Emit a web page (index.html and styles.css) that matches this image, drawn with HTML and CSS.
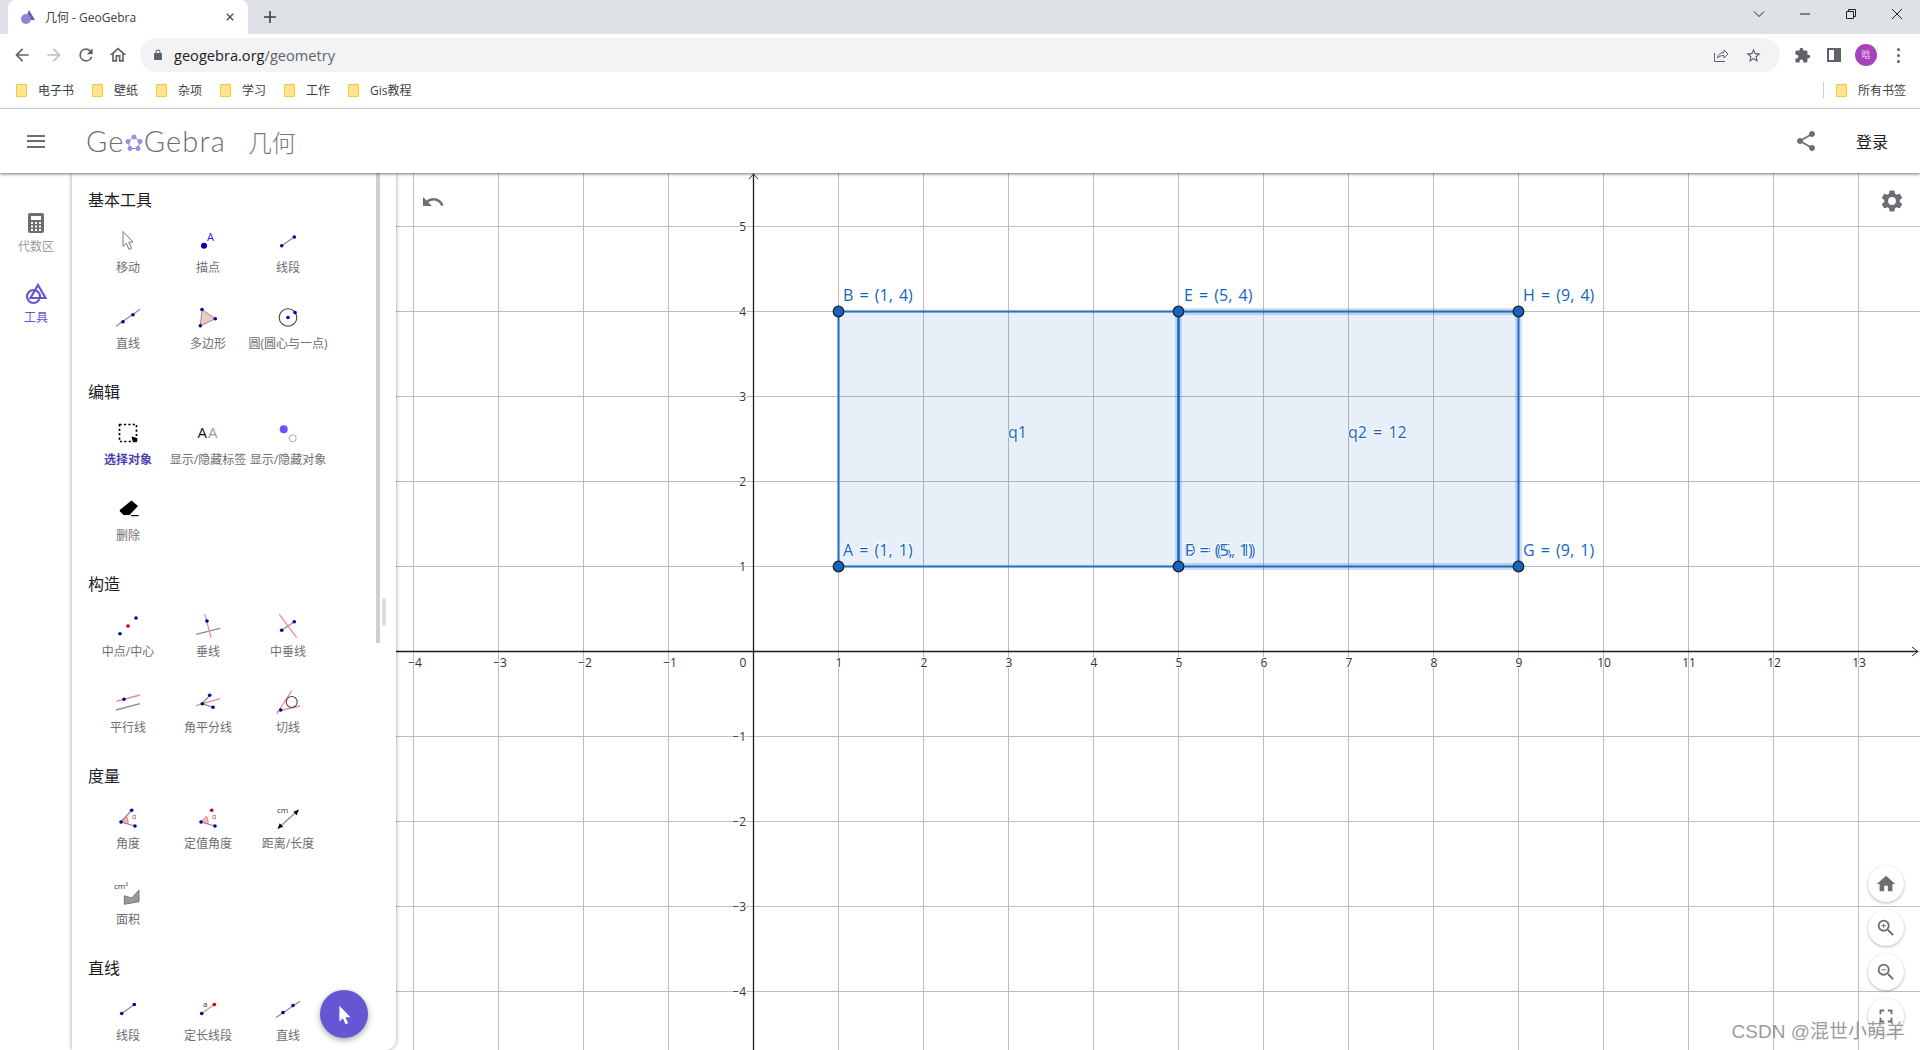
FILE: index.html
```html
<!DOCTYPE html>
<html lang="zh-CN">
<head>
    <meta charset="UTF-8">
    <title>几何 - GeoGebra</title>
    <link rel="stylesheet" href="styles.css">
</head>
<body>

    <!-- browser -->
    <div class="tabstrip">
        <div class="tab">
            <svg class="favicon" viewBox="0 0 16 16"><path d="M9 1l6 10H5z" fill="#5f5a9e"/><circle cx="6" cy="10" r="5" fill="#8a86e0"/></svg>
            <span class="tab-title">几何 - GeoGebra</span>
            <svg class="tab-close" viewBox="0 0 10 10"><path d="M1 1l8 8M9 1l-8 8"/></svg>
        </div>
        <svg class="new-tab" viewBox="0 0 12 12"><path d="M6 0v12M0 6h12"/></svg>
        <div class="win-controls">
            <svg viewBox="0 0 12 12"><path d="M1 3.5l5 5 5-5"/></svg>
            <svg viewBox="0 0 12 12"><path d="M1 6h10"/></svg>
            <svg viewBox="0 0 12 12"><path d="M1.5 3.5h7v7h-7zM3.5 3.5v-2h7v7h-2"/></svg>
            <svg viewBox="0 0 12 12"><path d="M1 1l10 10M11 1L1 11"/></svg>
        </div>
    </div>

    <div class="toolbar">
        <svg class="tb-icon" viewBox="0 0 24 24"><path d="M20 11H7.83l5.59-5.59L12 4l-8 8 8 8 1.41-1.41L7.83 13H20v-2z"/></svg>
        <svg class="tb-icon off" viewBox="0 0 24 24"><path d="M4 11h12.17l-5.59-5.59L12 4l8 8-8 8-1.41-1.41L16.17 13H4v-2z"/></svg>
        <svg class="tb-icon" viewBox="0 0 24 24"><path d="M17.65 6.35A7.96 7.96 0 0 0 12 4a8 8 0 1 0 7.75 10h-2.08A6 6 0 1 1 12 6c1.66 0 3.14.69 4.22 1.78L13 11h7V4l-2.35 2.35z"/></svg>
        <svg class="tb-icon" viewBox="0 0 24 24"><path d="M12 5.69l5 4.5V18h-2v-6H9v6H7v-7.81l5-4.5M12 3L2 12h3v8h6v-6h2v6h6v-8h3L12 3z"/></svg>
        <div class="address">
            <svg class="lock" viewBox="0 0 24 24"><path d="M18 8h-1V6a5 5 0 0 0-10 0v2H6a2 2 0 0 0-2 2v10c0 1.1.9 2 2 2h12a2 2 0 0 0 2-2V10a2 2 0 0 0-2-2zM9 6a3 3 0 0 1 6 0v2H9V6z"/></svg>
            <span class="url">geogebra.org<span class="url-path">/geometry</span></span>
            <svg class="addr-share" viewBox="0 0 16 16"><path d="M1.5 6v8.5h10.5M4.5 11c.5-3.5 3-5.500 6.500-5.500V3l4 4-4 4V8.500c-2.500 0-5 .5-6.500 2.500z"/></svg>
            <svg class="addr-star" viewBox="0 0 24 24"><path d="M22 9.24l-7.19-.62L12 2 9.19 8.63 2 9.24l5.46 4.73L5.82 21 12 17.27 18.18 21l-1.630-7.030L22 9.240zM12 15.400l-3.760 2.270 1-4.280-3.320-2.880 4.380-.38L12 6.100l1.710 4.040 4.380.38-3.320 2.880 1 4.280L12 15.400z"/></svg>
        </div>
        <svg class="tb-icon puzzle" viewBox="0 0 24 24"><path d="M20.500 11H19V7a2 2 0 0 0-2-2h-4V3.500a2.500 2.500 0 0 0-5 0V5H4a2 2 0 0 0-2 2v3.800h1.500a2.700 2.700 0 0 1 0 5.400H2V20a2 2 0 0 0 2 2h3.800v-1.500a2.700 2.700 0 0 1 5.400 0V22H17a2 2 0 0 0 2-2v-4h1.500a2.500 2.500 0 0 0 0-5z"/></svg>
        <div class="sidepanel-icon"></div>
        <div class="avatar">晗</div>
        <div class="kebab"><i></i><i></i><i></i></div>
    </div>

    <div class="bookmarks">
        <a class="bm"><span class="folder"></span>电子书</a>
        <a class="bm"><span class="folder"></span>壁纸</a>
        <a class="bm"><span class="folder"></span>杂项</a>
        <a class="bm"><span class="folder"></span>学习</a>
        <a class="bm"><span class="folder"></span>工作</a>
        <a class="bm"><span class="folder"></span>Gis教程</a>
        <div class="bm-all">
            <a class="bm"><span class="folder"></span>所有书签</a>
        </div>
    </div>

    <!-- app header -->
    <header class="app-header">
        <div class="burger"><i></i><i></i><i></i></div>
        <div class="logo">Ge<svg class="logo-o" viewBox="0 0 18 18"><path d="M9 3l6 4.500-2 7H5l-2-7z"/><circle cx="9" cy="3" r="2"/><circle cx="15" cy="7.500" r="2"/><circle cx="13" cy="14.500" r="2"/><circle cx="5" cy="14.500" r="2"/><circle cx="3" cy="7.500" r="2"/></svg>Gebra</div>
        <div class="app-title">几何</div>
        <svg class="header-share" viewBox="0 0 24 24"><path d="M18 16.080c-.76 0-1.440.3-1.960.77L8.910 12.700c.05-.23.09-.46.09-.7s-.04-.47-.09-.7l7.050-4.110c.54.5 1.250.81 2.040.81 1.660 0 3-1.340 3-3s-1.340-3-3-3-3 1.340-3 3c0 .24.04.47.09.7L8.040 9.810C7.500 9.310 6.790 9 6 9c-1.660 0-3 1.340-3 3s1.340 3 3 3c.79 0 1.500-.31 2.040-.81l7.120 4.160c-.05.21-.08.43-.08.65 0 1.610 1.310 2.920 2.920 2.920 1.610 0 2.920-1.310 2.920-2.920s-1.310-2.920-2.920-2.920z"/></svg>
        <div class="login">登录</div>
    </header>

    <div class="main">
        <nav class="rail">
            <div class="rail-item">
                <svg viewBox="0 0 24 24"><path d="M6 2h12a2 2 0 0 1 2 2v16a2 2 0 0 1-2 2H6a2 2 0 0 1-2-2V4a2 2 0 0 1 2-2zm1 3v4h10V5zm0 6v2h2v-2zm4 0v2h2v-2zm4 0v2h2v-2zm-8 3.500v2h2v-2zm4 0v2h2v-2zm4 0v2h2v-2zm-8 3.500v2h2v-2zm4 0v2h2v-2zm4 0v2h2v-2z" fill-rule="evenodd"/></svg>
                <span>代数区</span>
            </div>
            <div class="rail-item active">
                <svg viewBox="0 0 24 24"><circle cx="9.500" cy="14.500" r="6.500" class="rail-stroke"/><path d="M14 3l7.500 13H6.500z" class="rail-stroke"/></svg>
                <span>工具</span>
            </div>
        </nav>

        <aside class="panel">
            <section class="tool-section">
                <h3>基本工具</h3>
                <div class="tool-grid">
                    <div class="tool">
                        <svg viewBox="0 0 32 32"><path d="M11 5.500l10 10.500-4.200.3 2.700 6-2.500 1.100-2.600-6.100-3.400 3z" fill="#fff" stroke="#777" stroke-width="1"/></svg>
                        <span>移动</span>
                    </div>
                    <div class="tool">
                        <svg viewBox="0 0 32 32"><circle class="pt" cx="12" cy="19.700" r="3"/><text class="ic-a" x="15" y="15">A</text></svg>
                        <span>描点</span>
                    </div>
                    <div class="tool">
                        <svg viewBox="0 0 32 32"><path class="ln" d="M9.700 19.700L22.300 11"/><circle class="pt" cx="9.700" cy="19.700" r="1.800"/><circle class="pt" cx="22.300" cy="11" r="1.800"/></svg>
                        <span>线段</span>
                    </div>
                    <div class="tool">
                        <svg viewBox="0 0 32 32"><path class="ln" d="M4 24.300L28 7.300"/><circle class="pt" cx="11" cy="19.700" r="1.800"/><circle class="pt" cx="21" cy="12.700" r="1.800"/></svg>
                        <span>直线</span>
                    </div>
                    <div class="tool">
                        <svg viewBox="0 0 32 32"><path d="M10 7.500l13.300 9.300-15 7z" fill="#e5cfc4" stroke="#b9826a"/><circle class="pt" cx="10" cy="7.500" r="1.800"/><circle class="pt" cx="23.300" cy="16.800" r="1.800"/><circle class="pt" cx="8.300" cy="23.800" r="1.800"/></svg>
                        <span>多边形</span>
                    </div>
                    <div class="tool">
                        <svg viewBox="0 0 32 32"><circle class="dk" cx="16" cy="15.500" r="8.800"/><circle class="pt" cx="16" cy="15.500" r="1.800"/><circle class="pt" cx="23" cy="10.500" r="1.800"/></svg>
                        <span>圆(圆心与一点)</span>
                    </div>
                </div>
            </section>

            <section class="tool-section">
                <h3>编辑</h3>
                <div class="tool-grid">
                    <div class="tool selected">
                        <svg viewBox="0 0 32 32"><rect x="7.500" y="6.500" width="17" height="17" fill="none" stroke="#000" stroke-width="1.700" stroke-dasharray="2.200 2.200"/><path d="M19.500 18.500l6 1.500-2 .9 2 2.100-1.500 1.500-2-2-1 2z"/></svg>
                        <span>选择对象</span>
                    </div>
                    <div class="tool">
                        <svg viewBox="0 0 32 32"><text class="ic-aa" x="5.500" y="20">A</text><text class="ic-aa light" x="16" y="20">A</text></svg>
                        <span>显示/隐藏标签</span>
                    </div>
                    <div class="tool">
                        <svg viewBox="0 0 32 32"><circle cx="11.700" cy="11.300" r="4" fill="#6557ff"/><circle cx="20.700" cy="20.300" r="3.500" fill="none" stroke="#aaa"/></svg>
                        <span>显示/隐藏对象</span>
                    </div>
                    <div class="tool">
                        <svg viewBox="0 0 32 32"><path d="M19.500 6.500l6.500 5.500-8.500 9h-6l-3.500-3.500c-.5-.6-.4-1.400 0-1.800z"/><path d="M19 21h7.500v1.200H19z"/></svg>
                        <span>删除</span>
                    </div>
                </div>
            </section>

            <section class="tool-section">
                <h3>构造</h3>
                <div class="tool-grid">
                    <div class="tool">
                        <svg viewBox="0 0 32 32"><circle class="pt" cx="8" cy="23.700" r="1.800"/><circle class="pt red" cx="16" cy="16" r="1.800"/><circle class="pt" cx="24" cy="8" r="1.800"/></svg>
                        <span>中点/中心</span>
                    </div>
                    <div class="tool">
                        <svg viewBox="0 0 32 32"><path class="ln" d="M4 24.300L28 18.300"/><path class="ln pink" d="M13 4.300l6 23.400"/><circle class="pt" cx="15" cy="11" r="1.800"/></svg>
                        <span>垂线</span>
                    </div>
                    <div class="tool">
                        <svg viewBox="0 0 32 32"><path class="ln" d="M9.700 20.300l12.600-8.600"/><path class="ln pink" d="M7.300 4.300l17.400 23.400"/><circle class="pt" cx="9.700" cy="20.300" r="1.800"/><circle class="pt" cx="22.300" cy="11.700" r="1.800"/></svg>
                        <span>中垂线</span>
                    </div>
                    <div class="tool">
                        <svg viewBox="0 0 32 32"><path class="ln pink" d="M4 15.300L28 9"/><path class="ln" d="M4 24l24-6.300"/><circle class="pt" cx="12" cy="13.200" r="1.800"/></svg>
                        <span>平行线</span>
                    </div>
                    <div class="tool">
                        <svg viewBox="0 0 32 32"><path class="ln" d="M17.700 9.300l-7.400 8.400L21 21.300"/><path class="ln pink" d="M4 19.700l24-7"/><circle class="pt" cx="10.300" cy="17.700" r="1.800"/><circle class="pt" cx="17.700" cy="9.300" r="1.800"/><circle class="pt" cx="21" cy="21.300" r="1.800"/></svg>
                        <span>角平分线</span>
                    </div>
                    <div class="tool">
                        <svg viewBox="0 0 32 32"><path class="ln pink" d="M4.700 28L19.700 4.700M4.700 25.300L28 20"/><circle class="dk" cx="19.700" cy="16" r="5.500"/><circle class="pt" cx="8.700" cy="24" r="1.800"/></svg>
                        <span>切线</span>
                    </div>
                </div>
            </section>

            <section class="tool-section">
                <h3>度量</h3>
                <div class="tool-grid">
                    <div class="tool">
                        <svg viewBox="0 0 32 32"><path d="M9 20l5.200-5.800c1.600 2 2 4 1.800 7.700z" fill="#f9b4b8" stroke="#e66" stroke-width=".8"/><path class="ln" d="M19.700 8.300L9 20l14 4"/><circle class="pt" cx="9" cy="20" r="1.800"/><circle class="pt" cx="19.700" cy="8.300" r="1.800"/><circle class="pt" cx="23" cy="24" r="1.800"/><text class="ic-alpha" x="20" y="17">α</text></svg>
                        <span>角度</span>
                    </div>
                    <div class="tool">
                        <svg viewBox="0 0 32 32"><path d="M9 20l5.200-5.800c1.600 2 2 4 1.800 7.700z" fill="#f9b4b8" stroke="#e66" stroke-width=".8"/><path class="ln" d="M9 20l14 4"/><circle class="pt" cx="9" cy="20" r="1.800"/><circle class="pt red" cx="19.700" cy="8.300" r="1.800"/><circle class="pt" cx="23" cy="24" r="1.800"/><text class="ic-alpha" x="20" y="17">α</text></svg>
                        <span>定值角度</span>
                    </div>
                    <div class="tool">
                        <svg viewBox="0 0 32 32"><path class="ln" d="M5.700 26.700l21-19"/><path d="M26.700 7.700l-2 5.500-3.400-3.500zM5.700 26.700l2-5.500 3.400 3.500z"/><text class="ic-cm" x="5" y="11">cm</text></svg>
                        <span>距离/长度</span>
                    </div>
                    <div class="tool">
                        <svg viewBox="0 0 32 32"><path d="M12.300 17.700l7.400 2.300 7.300-8v11.700l-14.700 2.600z" fill="#999" stroke="#666" stroke-width=".8"/><text class="ic-cm" x="2" y="10.500">cm²</text></svg>
                        <span>面积</span>
                    </div>
                </div>
            </section>

            <section class="tool-section">
                <h3>直线</h3>
                <div class="tool-grid">
                    <div class="tool">
                        <svg viewBox="0 0 32 32"><path class="ln" d="M9.700 19.500L22.300 10.500"/><circle class="pt" cx="9.700" cy="19.500" r="1.800"/><circle class="pt" cx="22.300" cy="10.500" r="1.800"/></svg>
                        <span>线段</span>
                    </div>
                    <div class="tool">
                        <svg viewBox="0 0 32 32"><path class="ln pink" d="M9.700 19.500L22.300 10.500"/><circle class="pt" cx="9.700" cy="19.500" r="1.800"/><circle class="pt red" cx="22.300" cy="10.500" r="1.800"/><text class="ic-cm" x="11" y="13">a</text></svg>
                        <span>定长线段</span>
                    </div>
                    <div class="tool">
                        <svg viewBox="0 0 32 32"><path class="ln" d="M4 23.500L28 7.200"/><circle class="pt" cx="11" cy="18.500" r="1.800"/><circle class="pt" cx="21" cy="11.500" r="1.800"/></svg>
                        <span>直线</span>
                    </div>
                </div>
            </section>

            <div class="scroll-track"></div>
            <div class="scroll-thumb"></div>
            <div class="fab">
                <svg viewBox="0 0 24 24"><path d="M7 3l12 12.500h-5.500l3 6.500-2.800 1.200-3-6.600L7 20.500z"/></svg>
            </div>
        </aside>

        <div class="canvas">
            <svg class="plot" width="1524" height="877" viewBox="396 173 1524 877">
                <defs>
                    <pattern id="grid" x="413" y="226" width="85" height="85" patternUnits="userSpaceOnUse">
                        <path d="M0 0V85M0 0H85" fill="none" stroke="#bdbdbd" stroke-width="2"/>
                    </pattern>
                </defs>
                <rect x="396" y="173" width="1524" height="877" fill="url(#grid)"/>

                <!-- axes -->
                <path class="axis" d="M396 651.500H1918M753.500 1050V174"/>
                <path class="axis-head" d="M749 179l4.500-5 4.500 5M1912 647l6 4.500-6 4.500"/>

                <g class="tick-x">
                    <text x="415" y="667">−4</text>
                    <text x="500" y="667">−3</text>
                    <text x="585" y="667">−2</text>
                    <text x="670" y="667">−1</text>
                    <text x="743" y="667">0</text>
                    <text x="839" y="667">1</text>
                    <text x="924" y="667">2</text>
                    <text x="1009" y="667">3</text>
                    <text x="1094" y="667">4</text>
                    <text x="1179" y="667">5</text>
                    <text x="1264" y="667">6</text>
                    <text x="1349" y="667">7</text>
                    <text x="1434" y="667">8</text>
                    <text x="1519" y="667">9</text>
                    <text x="1604" y="667">10</text>
                    <text x="1689" y="667">11</text>
                    <text x="1774" y="667">12</text>
                    <text x="1859" y="667">13</text>
                </g>
                <g class="tick-y">
                    <text x="746" y="231">5</text>
                    <text x="746" y="316">4</text>
                    <text x="746" y="401">3</text>
                    <text x="746" y="486">2</text>
                    <text x="746" y="571">1</text>
                    <text x="746" y="741">−1</text>
                    <text x="746" y="826">−2</text>
                    <text x="746" y="911">−3</text>
                    <text x="746" y="996">−4</text>
                </g>

                <!-- q1, q2 -->
                <rect class="quad" x="838.500" y="311.500" width="340" height="255"/>
                <rect class="quad-glow" x="1178.500" y="311.500" width="340" height="255"/>
                <rect class="quad" x="1178.500" y="311.500" width="340" height="255"/>

                <g class="points">
                    <circle cx="838.500" cy="311.500" r="5.300"/>
                    <circle cx="838.500" cy="566.500" r="5.300"/>
                    <circle cx="1178.500" cy="311.500" r="5.300"/>
                    <circle cx="1178.500" cy="566.500" r="5.300"/>
                    <circle cx="1518.500" cy="311.500" r="5.300"/>
                    <circle cx="1518.500" cy="566.500" r="5.300"/>
                </g>

                <g class="labels">
                    <text x="843" y="301">B = (1, 4)</text>
                    <text x="843" y="556">A = (1, 1)</text>
                    <text x="1184" y="301">E = (5, 4)</text>
                    <text x="1184" y="556">D = (5, 1)</text>
                    <text x="1185" y="556">F = (5, 1)</text>
                    <text x="1523" y="301">H = (9, 4)</text>
                    <text x="1523" y="556">G = (9, 1)</text>
                    <text x="1008" y="438">q1</text>
                    <text x="1348" y="438">q2 = 12</text>
                </g>
            </svg>

            <svg class="undo" viewBox="0 0 24 24"><path d="M12.500 8c-2.650 0-5.050.99-6.900 2.600L2 7v9h9l-3.620-3.620c1.390-1.160 3.160-1.880 5.120-1.880 3.540 0 6.550 2.310 7.600 5.500l2.370-.78C21.080 11.030 17.150 8 12.500 8z"/></svg>
            <svg class="settings" viewBox="0 0 24 24"><path d="M19.140 12.940c.04-.3.06-.61.06-.94 0-.32-.02-.64-.07-.94l2.030-1.580a.49.49 0 0 0 .12-.61l-1.920-3.320a.488.488 0 0 0-.59-.22l-2.390.96c-.5-.38-1.030-.7-1.620-.94l-.36-2.540a.484.484 0 0 0-.48-.41h-3.840c-.24 0-.43.17-.47.41l-.36 2.540c-.59.24-1.130.57-1.620.94l-2.390-.96c-.22-.08-.47 0-.59.22L2.740 8.870c-.12.21-.08.47.12.61l2.030 1.580c-.05.3-.09.63-.09.94s.02.64.07.94l-2.030 1.580a.49.49 0 0 0-.12.61l1.920 3.320c.12.22.37.29.59.22l2.390-.96c.5.38 1.030.7 1.620.94l.36 2.540c.05.24.24.41.48.41h3.840c.24 0 .44-.17.47-.41l.36-2.540c.59-.24 1.130-.56 1.620-.94l2.390.96c.22.08.47 0 .59-.22l1.920-3.320c.12-.22.07-.47-.12-.61l-2.010-1.580zM12 15.600A3.600 3.600 0 1 1 12 8.400a3.600 3.600 0 0 1 0 7.200z"/></svg>

            <div class="view-btns">
                <div class="view-btn"><svg viewBox="0 0 24 24"><path d="M10 20v-6h4v6h5v-8h3L12 3 2 12h3v8z"/></svg></div>
                <div class="view-btn"><svg viewBox="0 0 24 24"><path d="M15.500 14h-.79l-.28-.27A6.470 6.470 0 0 0 16 9.500 6.500 6.500 0 1 0 9.500 16c1.610 0 3.090-.59 4.230-1.570l.27.28v.79l5 4.990L20.490 19l-4.990-5zm-6 0C7.010 14 5 11.990 5 9.500S7.010 5 9.500 5 14 7.010 14 9.500 11.990 14 9.500 14zM12 10h-2v2H9v-2H7V9h2V7h1v2h2v1z"/></svg></div>
                <div class="view-btn"><svg viewBox="0 0 24 24"><path d="M15.500 14h-.79l-.28-.27A6.470 6.470 0 0 0 16 9.500 6.500 6.500 0 1 0 9.500 16c1.610 0 3.090-.59 4.230-1.570l.27.28v.79l5 4.990L20.490 19l-4.990-5zm-6 0C7.010 14 5 11.990 5 9.500S7.010 5 9.500 5 14 7.010 14 9.500 11.990 14 9.500 14zM7 9h5v1H7z"/></svg></div>
                <div class="view-btn"><svg viewBox="0 0 24 24"><path d="M7 14H5v5h5v-2H7v-3zm-2-4h2V7h3V5H5v5zm12 7h-3v2h5v-5h-2v3zM14 5v2h3v3h2V5h-5z"/></svg></div>
            </div>

            <div class="watermark">CSDN @混世小萌羊</div>
        </div>
    </div>

</body>
</html>
```

FILE: styles.css
```css
html, body {
    margin: 0;
    padding: 0;
    height: 1050px;
    overflow: hidden;
    background-color: #fff;
    font-family: "Open Sans", "Noto Sans CJK SC", sans-serif;
}

/* browser */
.tabstrip {
    height: 34px;
    background-color: #dee1e6;
    display: flex;
    align-items: flex-start;
}

.tab {
    width: 240px;
    height: 34px;
    margin-left: 8px;
    padding: 0 12px;
    box-sizing: border-box;
    background-color: #fff;
    border-radius: 8px 8px 0 0;
    display: flex;
    align-items: center;
}

.favicon {
    width: 16px;
    height: 16px;
    margin-right: 9px;
}

.tab-title {
    flex: 1;
    font-size: 12px;
    color: #3c4043;
}

.tab-close {
    width: 8px;
    height: 8px;
    margin-right: 2px;
    fill: none;
    stroke: #45474a;
    stroke-width: 1.6;
}

.new-tab {
    width: 12px;
    height: 12px;
    margin: 11px 0 0 16px;
    stroke: #3c4043;
    stroke-width: 1.6;
}

.win-controls {
    margin-left: auto;
    margin-right: 17px;
    margin-top: 8px;
    display: flex;
    gap: 34px;
}

.win-controls svg {
    width: 12px;
    height: 12px;
    fill: none;
    stroke: #1f1f1f;
    stroke-width: 1;
}

.toolbar {
    height: 40px;
    padding: 2px 0 0 12px;
    box-sizing: border-box;
    background-color: #fff;
    display: flex;
    align-items: center;
    gap: 12px;
}

.tb-icon {
    width: 20px;
    height: 20px;
    fill: #5f6368;
    flex: none;
}

.tb-icon.off {
    fill: #bdc1c6;
}

.address {
    width: 1640px;
    height: 34px;
    padding: 0 18px 0 12px;
    box-sizing: border-box;
    flex: none;
    background-color: #f1f3f4;
    border-radius: 17px;
    display: flex;
    align-items: center;
}

.lock {
    width: 12px;
    height: 12px;
    fill: #5f6368;
    margin-right: 10px;
}

.url {
    flex: 1;
    font-size: 14.600px;
    color: #202124;
}

.url-path {
    color: #5f6368;
}

.addr-share {
    width: 16px;
    height: 16px;
    fill: none;
    stroke: #5f6368;
    stroke-width: 1;
    margin-right: 16px;
}

.addr-star {
    width: 17px;
    height: 17px;
    fill: #5f6368;
}

.puzzle {
    margin-left: 2px;
    width: 17px;
    height: 17px;
}

.sidepanel-icon {
    width: 14px;
    height: 14px;
    margin-left: 4px;
    background-color: #fff;
    border: solid #5f6368;
    border-width: 2px 7px 2px 2px;
    box-sizing: border-box;
    flex: none;
}

.avatar {
    width: 22px;
    height: 22px;
    margin-left: 2px;
    border-radius: 50%;
    background-color: #a742bc;
    color: #f3d9f8;
    font-size: 9px;
    line-height: 22px;
    text-align: center;
    flex: none;
}

.kebab {
    display: flex;
    flex-direction: column;
    gap: 3px;
    margin-left: 8px;
}

.kebab i {
    display: block;
    width: 3px;
    height: 3px;
    border-radius: 50%;
    background-color: #5f6368;
}

.bookmarks {
    height: 32px;
    padding: 0 14px 2px 16px;
    border-bottom: 1px solid #dadce0;
    display: flex;
    align-items: center;
    gap: 18px;
}

.bm {
    display: flex;
    align-items: center;
    font-size: 12px;
    color: #3c4043;
}

.folder {
    width: 11px;
    height: 13px;
    margin-right: 11px;
    background-color: #fde68d;
    border: 1px solid #f0c93e;
    border-radius: 1px;
    box-sizing: border-box;
}

.bm-all {
    margin-left: auto;
    padding-left: 12px;
    border-left: 1px solid #ccc;
    height: 16px;
    display: flex;
    align-items: center;
}

/* app header */
.app-header {
    position: relative;
    z-index: 3;
    height: 64px;
    background-color: #fff;
    box-shadow: 0 1px 3px rgba(0, 0, 0, 0.55);
    display: flex;
    align-items: center;
}

.burger {
    margin-left: 27px;
    display: flex;
    flex-direction: column;
    gap: 3.500px;
}

.burger i {
    display: block;
    width: 18px;
    height: 2px;
    background-color: #6e6d73;
}

.logo {
    margin-left: 41px;
    margin-top: -2px;
    font-family: Lato, sans-serif;
    font-weight: 300;
    font-size: 29px;
    letter-spacing: 1.200px;
    color: #6e6e70;
    display: flex;
    align-items: center;
}

.logo-o {
    width: 18px;
    height: 18px;
    margin: 5px 1px 0 0;
    fill: #9c97e8;
    stroke: #8b86dc;
    stroke-width: 1;
}

.logo-o path {
    fill: none;
}

.app-title {
    margin-left: 22px;
    font-size: 24px;
    font-weight: 300;
    color: #7a797e;
    margin-top: 1px;
}

.header-share {
    margin-left: auto;
    width: 24px;
    height: 24px;
    fill: #6e6d73;
}

.login {
    margin-left: 38px;
    margin-right: 32px;
    font-size: 16px;
    color: #1c1c1f;
}

.main {
    display: flex;
    height: 877px;
    overflow: hidden;
}

.rail {
    width: 72px;
    flex: none;
    padding-top: 38px;
    box-sizing: border-box;
    display: flex;
    flex-direction: column;
    align-items: center;
    gap: 27px;
}

.rail-item {
    display: flex;
    flex-direction: column;
    align-items: center;
    gap: 4px;
    font-size: 12px;
    line-height: 16px;
    color: #9b9a9f;
}

.rail-item svg {
    width: 24px;
    height: 24px;
    fill: #6e6d73;
}

.rail-item.active {
    color: #6557d2;
}

.rail-item .rail-stroke {
    fill: none;
    stroke: #6557d2;
    stroke-width: 2.200;
}

.panel {
    position: relative;
    z-index: 2;
    width: 324px;
    flex: none;
    padding-top: 16px;
    box-sizing: border-box;
    background-color: #fff;
    border-radius: 0 0 10px 0;
    box-shadow: 0 0 4px rgba(0, 0, 0, 0.4);
    overflow: hidden;
}

.tool-section {
    margin-bottom: 3px;
}

.tool-section h3 {
    margin: 0 0 15px 16px;
    font-size: 16px;
    font-weight: 400;
    line-height: 22px;
    color: #1c1c1f;
}

.tool-grid {
    display: grid;
    grid-template-columns: repeat(3, 80px);
    grid-auto-rows: 76px;
    padding-left: 16px;
    min-height: 152px;
}

.tool {
    display: flex;
    flex-direction: column;
    align-items: center;
    gap: 2px;
    font-size: 12px;
    line-height: 16px;
    color: #6e6d73;
    white-space: nowrap;
}

.tool svg {
    width: 32px;
    height: 32px;
    flex: none;
}

.tool.selected {
    color: #4a3fb0;
    font-weight: 700;
}

/* tool icons */
.pt { fill: #0000aa; }
.pt.red { fill: #c40000; }
.ln { stroke: #8d8d8d; stroke-width: 1.300; fill: none; }
.ln.pink { stroke: #f28a8e; }
.dk { stroke: #444; stroke-width: 1.100; fill: none; }
.ic-a { font-size: 11px; fill: #2222ee; font-family: "Open Sans", sans-serif; }
.ic-aa { font-size: 15px; fill: #111; font-family: "Open Sans", sans-serif; }
.ic-aa.light { fill: #999; }
.ic-alpha { font-size: 7px; fill: #e33; font-family: "Open Sans", sans-serif; }
.ic-cm { font-size: 8px; fill: #333; font-family: "Open Sans", sans-serif; }

.scroll-track {
    position: absolute;
    left: 304px;
    top: 0;
    width: 4px;
    height: 470px;
    background-color: #cfcfcf;
}

.scroll-thumb {
    position: absolute;
    left: 310px;
    top: 425px;
    width: 4px;
    height: 28px;
    border-radius: 2px;
    background-color: #dcdcdc;
}

.fab {
    position: absolute;
    left: 248px;
    top: 817px;
    width: 48px;
    height: 48px;
    border-radius: 50%;
    background-color: #6557d2;
    box-shadow: 0 2px 6px rgba(0, 0, 0, 0.35);
    display: flex;
    align-items: center;
    justify-content: center;
}

.fab svg {
    width: 22px;
    height: 22px;
    fill: #fff;
}

/* graphics view */
.canvas {
    position: relative;
    flex: 1;
    background-color: #fff;
    overflow: hidden;
}

.plot {
    display: block;
}

.axis {
    fill: none;
    stroke: #1c1c1f;
    stroke-width: 1.300;
}

.axis-head {
    fill: none;
    stroke: #333;
    stroke-width: 1;
}

.tick-x text, .tick-y text {
    font-family: "Open Sans", sans-serif;
    font-size: 12px;
    fill: #333;
    paint-order: stroke;
    stroke: #fff;
    stroke-width: 2px;
}

.tick-x text {
    text-anchor: middle;
}

.tick-y text {
    text-anchor: end;
}

.quad {
    fill: rgba(21, 101, 192, 0.1);
    stroke: #1565c0;
    stroke-opacity: 0.85;
    stroke-width: 2.200;
}

.quad-glow {
    fill: none;
    stroke: #1565c0;
    stroke-opacity: 0.2;
    stroke-width: 7;
}

.points circle {
    fill: #1565c0;
    stroke: #1c1c1f;
    stroke-width: 1.200;
}

.labels text {
    font-family: "Open Sans", sans-serif;
    font-size: 16px;
    word-spacing: 2px;
    fill: #1565c0;
    paint-order: stroke;
    stroke: rgba(255, 255, 255, 0.75);
    stroke-width: 2px;
}

.undo {
    position: absolute;
    left: 25px;
    top: 17px;
    width: 24px;
    height: 24px;
    fill: #6e6d73;
}

.settings {
    position: absolute;
    right: 15px;
    top: 15px;
    width: 26px;
    height: 26px;
    fill: #6e6d73;
}

.view-btns {
    position: absolute;
    right: 16px;
    top: 693px;
    display: flex;
    flex-direction: column;
    gap: 8px;
}

.view-btn {
    width: 36px;
    height: 36px;
    border-radius: 50%;
    background-color: #fff;
    box-shadow: 0 1px 3px rgba(0, 0, 0, 0.3);
    display: flex;
    align-items: center;
    justify-content: center;
}

.view-btn svg {
    width: 22px;
    height: 22px;
    fill: #6e6d73;
}

.watermark {
    position: absolute;
    right: 15px;
    bottom: 6px;
    font-family: "Liberation Sans", "Noto Sans CJK SC", sans-serif;
    font-size: 19px;
    line-height: 24px;
    color: rgba(110, 110, 110, 0.7);
}
```
